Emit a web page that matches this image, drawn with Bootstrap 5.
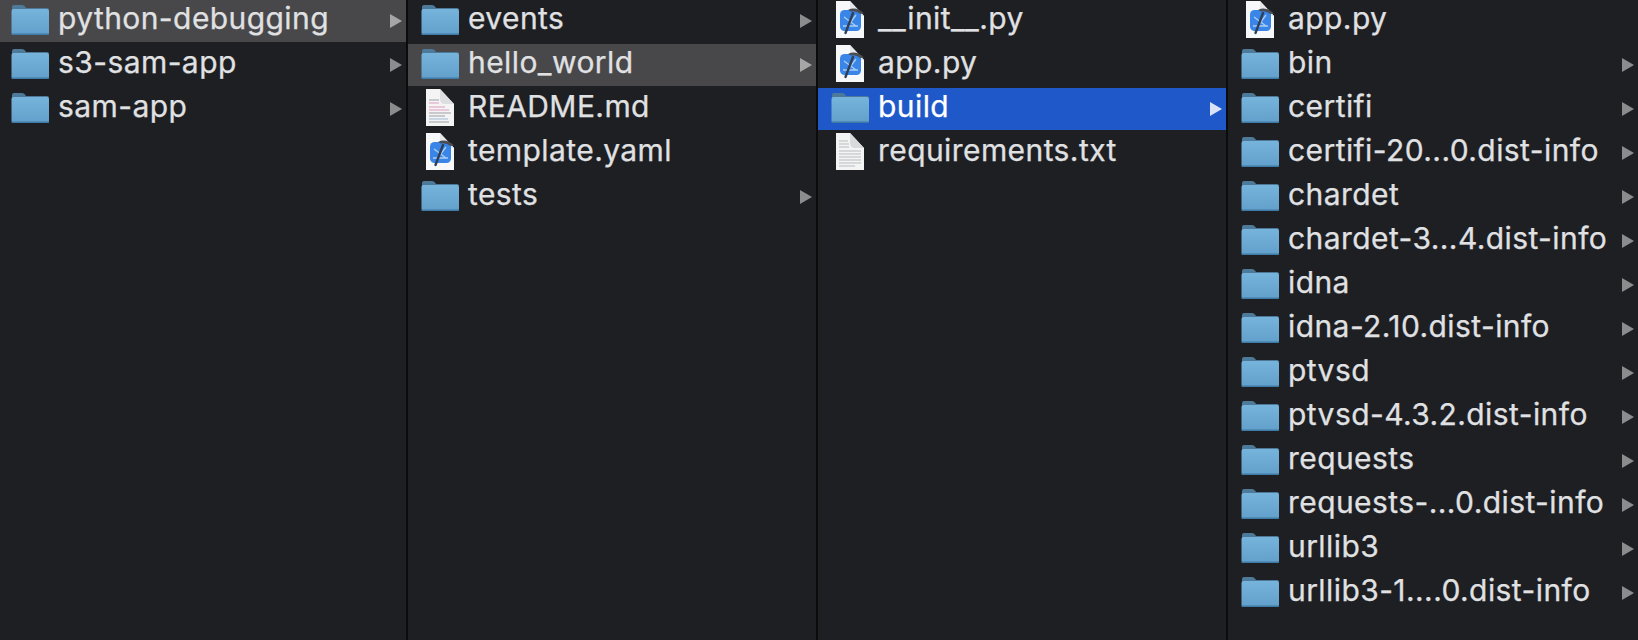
<!DOCTYPE html>
<html lang="en"><head><meta charset="utf-8"><title>Finder columns</title>
<link href="https://cdn.jsdelivr.net/npm/bootstrap@5.3.0/dist/css/bootstrap.min.css" rel="stylesheet">
<style>
html,body{height:100%;margin:0;background:#1e1f23;overflow:hidden}
.sprite{position:absolute;width:0;height:0;overflow:hidden}
.browser{height:640px;background:#0b0b0c;gap:2px}
.pane{flex:0 0 408px;background:#1e1f23;display:flex;flex-direction:column;gap:2px}
.pane-first{flex-basis:406px}
.pane-last{flex:1 1 auto}
.entry{height:42px;flex:none;display:flex;align-items:center;padding:0 4px 0 13px;color:#e0e1e3;font:400 30px/42px Inter,"Noto Sans",sans-serif;letter-spacing:.42px;-webkit-text-stroke:.25px currentColor}
.pane-first .entry{padding-left:11px}
.entry-open{background:#48484a}
.entry-sel{background:#1f59c9;color:#fff}
.ico{flex:none;width:38px;height:42px;margin-right:9px;display:block}
.label{flex:1 1 auto;white-space:nowrap;position:relative;top:-3px}
.arrow{flex:none;width:12px;height:14px;fill:#8b8c8e;display:block}
.entry-sel .arrow{fill:#dbe4f6}
.entry-open .arrow{fill:#a6a6a7}
</style></head><body>
<svg class="sprite" aria-hidden="true"><defs>
<linearGradient id="fbody" x1="0" y1="0" x2="0" y2="1"><stop offset="0" stop-color="#76b4dc"/><stop offset="1" stop-color="#629fca"/></linearGradient>
<symbol id="folder" viewBox="0 0 38 42">
<path d="M1 10V7Q1 5 3 5H11Q13 5 14 6.500L15 8H36Q38 8 38 10Z" fill="#4d7a98"/>
<rect x="0.500" y="9" width="37.500" height="26" rx="2" fill="url(#fbody)"/>
<rect x="0.500" y="33.500" width="37.500" height="1.500" rx=".7" fill="#3f7ba6"/>
</symbol>
<symbol id="xcdoc" viewBox="0 0 38 42">
<path d="M5 1H19L33 16V38H5Z" fill="#f7f8f9"/><path d="M19 1L33 16H24Q19 16 19 11Z" fill="#e6e8ea"/>
<rect x="9" y="10" width="21" height="21" rx="4.500" fill="#3a86e8"/>
<path d="M13 17l12 9M25 15l-9 12M12 26h15" stroke="#a9cdf6" stroke-width="1.300" fill="none"/>
<path d="M14.500 33L22 13" stroke="#2f3f55" stroke-width="2.400" stroke-linecap="round"/>
<path d="M17 10Q25 6 33 13.500L29.500 14Q25 10.500 20 11.500Z" fill="#4a4e54"/>
</symbol>
<symbol id="txtdoc" viewBox="0 0 38 42">
<path d="M5 1H19L33 16V38H5Z" fill="#f4f4f5"/><path d="M19 1L33 16H24Q19 16 19 11Z" fill="#d8dadc"/>
<path d="M8 9H17M8 12H18M8 15H18M8 19H30M8 22H30M8 25H30M8 28H30M8 31H30M8 34H24" stroke="#b9bbbe" stroke-width="1"/>
</symbol>
<symbol id="mddoc" viewBox="0 0 38 42">
<path d="M5 1H19L33 16V38H5Z" fill="#f4f4f5"/><path d="M19 1L33 16H24Q19 16 19 11Z" fill="#dcdee0"/>
<path d="M8 12H18M8 25H30M8 28H24M8 34H28" stroke="#9d9fa4" stroke-width="1"/>
<path d="M8 15H18M8 19H24M8 22H28" stroke="#dd9dbd" stroke-width="1"/>
<path d="M8 31H27" stroke="#9db8d3" stroke-width="1"/>
</symbol>
<symbol id="tri" viewBox="0 0 12 14"><path d="M0 0L12 7L0 14Z"/></symbol>
</defs></svg>
<main class="browser d-flex">
<section class="pane pane-first">
<div class="entry entry-open"><svg class="ico"><use href="#folder"/></svg><span class="label">python-debugging</span><svg class="arrow"><use href="#tri"/></svg></div>
<div class="entry"><svg class="ico"><use href="#folder"/></svg><span class="label">s3-sam-app</span><svg class="arrow"><use href="#tri"/></svg></div>
<div class="entry"><svg class="ico"><use href="#folder"/></svg><span class="label">sam-app</span><svg class="arrow"><use href="#tri"/></svg></div>
</section>
<section class="pane">
<div class="entry"><svg class="ico"><use href="#folder"/></svg><span class="label">events</span><svg class="arrow"><use href="#tri"/></svg></div>
<div class="entry entry-open"><svg class="ico"><use href="#folder"/></svg><span class="label">hello_world</span><svg class="arrow"><use href="#tri"/></svg></div>
<div class="entry"><svg class="ico"><use href="#mddoc"/></svg><span class="label">README.md</span></div>
<div class="entry"><svg class="ico"><use href="#xcdoc"/></svg><span class="label">template.yaml</span></div>
<div class="entry"><svg class="ico"><use href="#folder"/></svg><span class="label">tests</span><svg class="arrow"><use href="#tri"/></svg></div>
</section>
<section class="pane">
<div class="entry"><svg class="ico"><use href="#xcdoc"/></svg><span class="label">__init__.py</span></div>
<div class="entry"><svg class="ico"><use href="#xcdoc"/></svg><span class="label">app.py</span></div>
<div class="entry entry-sel"><svg class="ico"><use href="#folder"/></svg><span class="label">build</span><svg class="arrow"><use href="#tri"/></svg></div>
<div class="entry"><svg class="ico"><use href="#txtdoc"/></svg><span class="label">requirements.txt</span></div>
</section>
<section class="pane pane-last">
<div class="entry"><svg class="ico"><use href="#xcdoc"/></svg><span class="label">app.py</span></div>
<div class="entry"><svg class="ico"><use href="#folder"/></svg><span class="label">bin</span><svg class="arrow"><use href="#tri"/></svg></div>
<div class="entry"><svg class="ico"><use href="#folder"/></svg><span class="label">certifi</span><svg class="arrow"><use href="#tri"/></svg></div>
<div class="entry"><svg class="ico"><use href="#folder"/></svg><span class="label">certifi-20...0.dist-info</span><svg class="arrow"><use href="#tri"/></svg></div>
<div class="entry"><svg class="ico"><use href="#folder"/></svg><span class="label">chardet</span><svg class="arrow"><use href="#tri"/></svg></div>
<div class="entry"><svg class="ico"><use href="#folder"/></svg><span class="label">chardet-3...4.dist-info</span><svg class="arrow"><use href="#tri"/></svg></div>
<div class="entry"><svg class="ico"><use href="#folder"/></svg><span class="label">idna</span><svg class="arrow"><use href="#tri"/></svg></div>
<div class="entry"><svg class="ico"><use href="#folder"/></svg><span class="label">idna-2.10.dist-info</span><svg class="arrow"><use href="#tri"/></svg></div>
<div class="entry"><svg class="ico"><use href="#folder"/></svg><span class="label">ptvsd</span><svg class="arrow"><use href="#tri"/></svg></div>
<div class="entry"><svg class="ico"><use href="#folder"/></svg><span class="label">ptvsd-4.3.2.dist-info</span><svg class="arrow"><use href="#tri"/></svg></div>
<div class="entry"><svg class="ico"><use href="#folder"/></svg><span class="label">requests</span><svg class="arrow"><use href="#tri"/></svg></div>
<div class="entry"><svg class="ico"><use href="#folder"/></svg><span class="label">requests-...0.dist-info</span><svg class="arrow"><use href="#tri"/></svg></div>
<div class="entry"><svg class="ico"><use href="#folder"/></svg><span class="label">urllib3</span><svg class="arrow"><use href="#tri"/></svg></div>
<div class="entry"><svg class="ico"><use href="#folder"/></svg><span class="label">urllib3-1....0.dist-info</span><svg class="arrow"><use href="#tri"/></svg></div>
</section>
</main>
<script src="https://cdn.jsdelivr.net/npm/bootstrap@5.3.0/dist/js/bootstrap.bundle.min.js"></script>
</body></html>
